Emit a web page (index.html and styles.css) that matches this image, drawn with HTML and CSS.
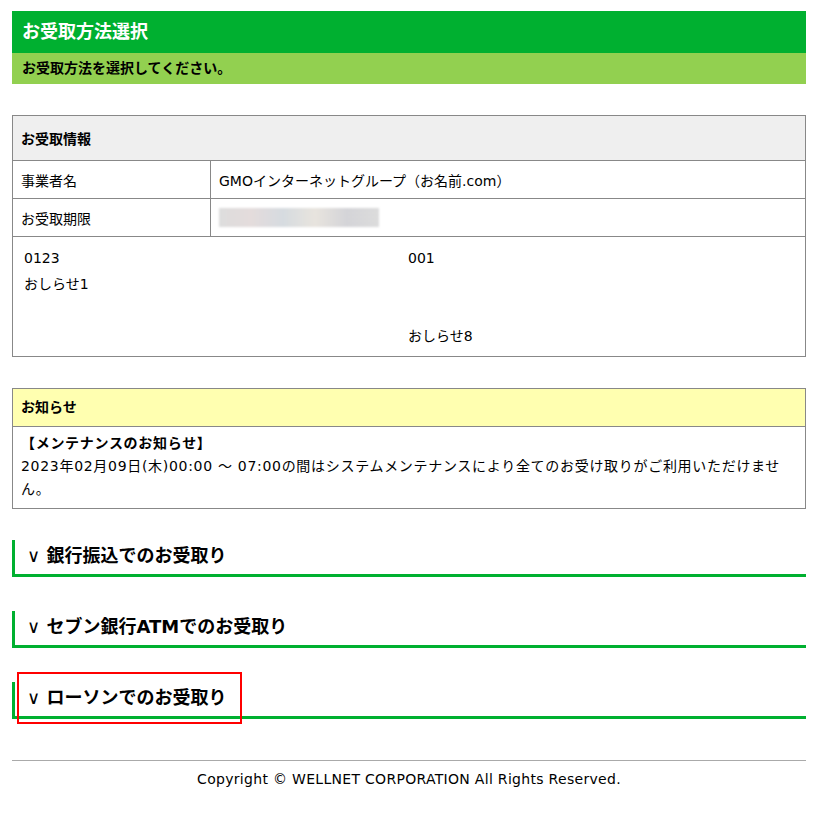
FILE: index.html
```html
<!DOCTYPE html>
<html lang="ja">

<head>
    <meta charset="UTF-8">
    <meta name="viewport" content="width=device-width, initial-scale=1.0">
    <title>お受取方法選択</title>
    <link rel="stylesheet" href="styles.css">
</head>

<body>

    <div class="wrapper">
        <div class="page-title">
            <h1>お受取方法選択</h1>
            <p class="lead">お受取方法を選択してください。</p>
        </div>

        <table class="info-table">
            <tr>
                <th colspan="2" class="head">お受取情報</th>
            </tr>
            <tr>
                <td class="label">事業者名</td>
                <td>GMOインターネットグループ（お名前.com）</td>
            </tr>
            <tr>
                <td class="label">お受取期限</td>
                <td><span class="blur"></span></td>
            </tr>
            <tr>
                <td colspan="2" class="notes">
                    <div class="note-cols">
                        <div class="note-col first">
                            <p>0123</p>
                            <p>おしらせ1</p>
                        </div>
                        <div class="note-col">
                            <p>001</p>
                            <p>&nbsp;</p>
                            <p>&nbsp;</p>
                            <p>おしらせ8</p>
                        </div>
                    </div>
                </td>
            </tr>
        </table>

        <div class="notice">
            <div class="notice-head">お知らせ</div>
            <div class="notice-body">
                <strong>【メンテナンスのお知らせ】</strong><br>
                2023年02月09日(木)00:00 ～ 07:00の間はシステムメンテナンスにより全てのお受け取りがご利用いただけません。
            </div>
        </div>

        <div class="method">
            <h2><span class="arrow">∨</span> 銀行振込でのお受取り</h2>
        </div>
        <div class="method">
            <h2><span class="arrow">∨</span> セブン銀行ATMでのお受取り</h2>
        </div>
        <div class="method">
            <h2 class="marked"><span class="arrow">∨</span> ローソンでのお受取り</h2>
        </div>

        <footer class="footer">Copyright © WELLNET CORPORATION All Rights Reserved.</footer>
    </div>

</body>

</html>
```

FILE: styles.css
```css
body {
    font-family: 'DejaVu Sans', 'Noto Sans CJK JP', sans-serif;
    font-size: 14px;
    color: #000;
    background-color: #fff;
    margin: 0;
}

.wrapper {
    margin: 11px 18px 0 12px;
}

.page-title h1 {
    margin: 0;
    background-color: #00b030;
    color: #fff;
    font-size: 18px;
    font-weight: bold;
    height: 42px;
    line-height: 42px;
    padding-left: 10px;
}

.page-title .lead {
    margin: 0;
    background-color: #92d050;
    font-weight: bold;
    height: 31px;
    line-height: 31px;
    padding-left: 10px;
}

.info-table {
    width: 100%;
    margin-top: 31px;
    border-collapse: collapse;
}

.info-table th,
.info-table td {
    border: 1px solid #888;
    padding: 0 8px;
    text-align: left;
    height: 37px;
}

.info-table .head {
    background-color: #efefef;
    height: 44px;
}

.info-table .label {
    width: 181px;
}

.blur {
    display: inline-block;
    vertical-align: middle;
    width: 160px;
    height: 19px;
    background: linear-gradient(90deg, #ddd 0, #e4dcdc 20%, #d6dbe0 40%, #e8e4de 60%, #d4d4d8 80%, #dcdcdc 100%);
    filter: blur(1px);
}

.info-table .notes {
    padding: 8px 0 7px;
}

.note-cols {
    display: flex;
}

.note-col {
    flex: 1;
    padding-left: 11px;
}

.note-col.first {
    flex: none;
    width: 373px;
}

.note-col p {
    margin: 0;
    line-height: 26px;
}

.notice {
    margin-top: 31px;
    border: 1px solid #888;
}

.notice-head {
    background-color: #ffffb0;
    font-weight: bold;
    height: 37px;
    line-height: 37px;
    padding-left: 8px;
    border-bottom: 1px solid #888;
}

.notice-body {
    padding: 5px 20px 7px 8px;
    line-height: 23px;
    letter-spacing: 0.7px;
}

.method {
    margin-top: 31px;
    border-left: 3px solid #00b030;
    border-bottom: 3px solid #00b030;
    height: 34px;
}

.method + .method {
    margin-top: 34px;
}

.method h2 {
    margin: 0;
    font-size: 18px;
    font-weight: bold;
    line-height: 32px;
    padding-left: 12px;
    position: relative;
}

.method .arrow {
    font-weight: normal;
    font-size: 18px;
}

.marked::after {
    content: "";
    position: absolute;
    left: 2px;
    top: -10px;
    width: 221px;
    height: 48px;
    border: 2px solid #f00;
}

.footer {
    margin-top: 41px;
    border-top: 1px solid #aaa;
    text-align: center;
    padding-top: 8px;
    line-height: 20px;
    letter-spacing: 0.3px;
}
```
